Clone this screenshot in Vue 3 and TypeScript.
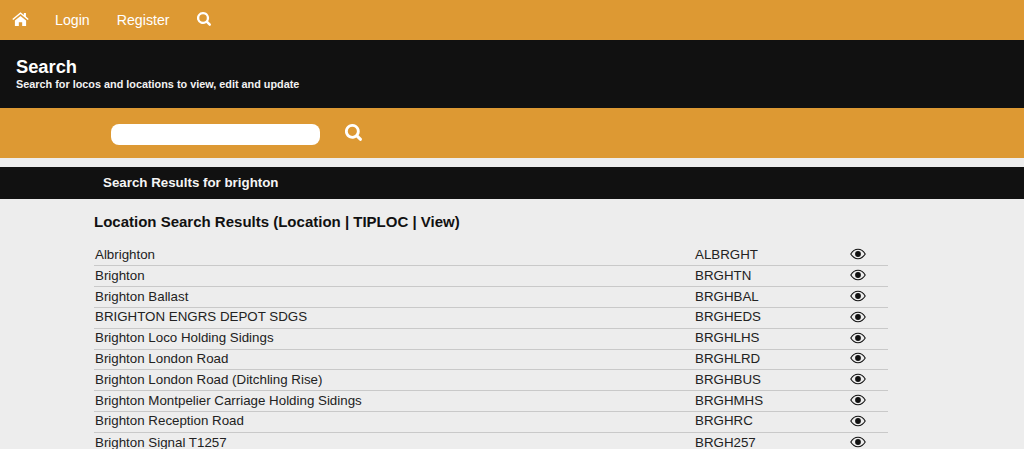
<script setup lang="ts">
const rows: [string, string][] = [
  ['Albrighton', 'ALBRGHT'],
  ['Brighton', 'BRGHTN'],
  ['Brighton Ballast', 'BRGHBAL'],
  ['BRIGHTON ENGRS DEPOT SDGS', 'BRGHEDS'],
  ['Brighton Loco Holding Sidings', 'BRGHLHS'],
  ['Brighton London Road', 'BRGHLRD'],
  ['Brighton London Road (Ditchling Rise)', 'BRGHBUS'],
  ['Brighton Montpelier Carriage Holding Sidings', 'BRGHMHS'],
  ['Brighton Reception Road', 'BRGHRC'],
  ['Brighton Signal T1257', 'BRGH257'],
]
const searchPath = 'M9.5 0a9.5 9.5 0 1 0 5.2 17.4l4 4a2 2 0 0 0 2.8-2.8l-4-4A9.5 9.5 0 0 0 9.5 0zm0 3.6a5.9 5.9 0 1 1 0 11.8 5.9 5.9 0 0 1 0-11.8z'
</script>

<template>
  <div class="page">
    <nav class="nav">
      <svg class="home" viewBox="0 0 18 15" width="17" height="14">
        <path fill="#fff" d="M9 0.2 0.2 7.4l1 1.2L9 2.2l7.8 6.4 1-1.2-3-2.5V1h-2.2v2.1zM3 9.2V15h4.2v-4h3.6v4H15V9.2L9 4.3z" />
      </svg>
      <a class="link login">Login</a>
      <a class="link register">Register</a>
      <svg class="nav-search" viewBox="0 0 22 22" width="14" height="14"><path fill="#fff" :d="searchPath" /></svg>
    </nav>
    <header class="hero">
      <h1>Search</h1>
      <p>Search for locos and locations to view, edit and update</p>
    </header>
    <div class="searchbar">
      <input class="input" type="text" />
      <svg class="bar-search" viewBox="0 0 22 22" width="17" height="17"><path fill="#fff" :d="searchPath" /></svg>
    </div>
    <div class="results-bar">Search Results for brighton</div>
    <main class="content">
      <h2>Location Search Results (Location | TIPLOC | View)</h2>
      <div class="table">
        <div v-for="r in rows" :key="r[1]" class="row">
          <span class="name">{{ r[0] }}</span>
          <span class="code">{{ r[1] }}</span>
          <svg class="eye" viewBox="0 0 16 12" width="16" height="12">
            <path fill="none" stroke="#111" stroke-width="1.1" d="M.8 6C2.6 3 5 1.3 8 1.3S13.4 3 15.2 6C13.4 9 11 10.7 8 10.7S2.6 9 .8 6z" />
            <circle cx="8" cy="6" r="2.9" fill="#111" />
          </svg>
        </div>
      </div>
    </main>
  </div>
</template>

<style>
html, body { margin: 0; overflow: hidden; }
</style>

<style scoped>
.page {
  width: 1024px;
  height: 449px;
  overflow: hidden;
  background: #ededed;
  font-family: "Liberation Sans", Arial, sans-serif;
}
.nav {
  height: 40px;
  background: #dd9933;
  display: flex;
  align-items: center;
  padding-left: 12px;
  box-sizing: border-box;
  color: #fff;
}
.home { margin-top: -3px; }
.link { font-size: 14.2px; color: #fff; margin-top: -1px; }
.login { margin-left: 26px; }
.register { margin-left: 27px; }
.nav-search { margin-left: 27px; margin-top: -3px; }
.hero {
  height: 68px;
  background: #111111;
  color: #fff;
  box-sizing: border-box;
  padding: 17px 16px 0;
}
.hero h1 { margin: 0; font-size: 18.3px; line-height: 20px; font-weight: 700; }
.hero p { margin: 0; font-size: 10.85px; line-height: 15px; font-weight: 700; color: #f2f2f2; }
.searchbar {
  height: 50px;
  background: #dd9933;
  display: flex;
  align-items: flex-start;
  padding: 16px 0 0 111px;
  box-sizing: border-box;
}
.input {
  width: 209px;
  height: 21px;
  border: 0;
  padding: 0;
  border-radius: 8px;
  background: #fff;
  outline: none;
}
.bar-search { margin-left: 25px; margin-top: 0; }
.results-bar {
  margin-top: 9px;
  height: 32px;
  background: #111111;
  color: #f5f5f5;
  font-size: 13.33px;
  font-weight: 700;
  line-height: 31px;
  padding-left: 103px;
}
.content { padding: 14px 0 0 94px; }
.content h2 {
  margin: 0;
  font-size: 15px;
  line-height: 18px;
  font-weight: 700;
  color: #111;
}
.table { margin-top: 14.6px; width: 794px; }
.row {
  height: 20.8px;
  box-sizing: border-box;
  border-bottom: 1px solid #c9c9c9;
  padding: 0 0 2px 1px;
  display: flex;
  align-items: center;
  font-size: 13.33px;
  color: #222;
}
.row:last-child { border-bottom: 0; }
.name { width: 600px; }
.code { width: 155px; }
.eye { flex: none; }
</style>
